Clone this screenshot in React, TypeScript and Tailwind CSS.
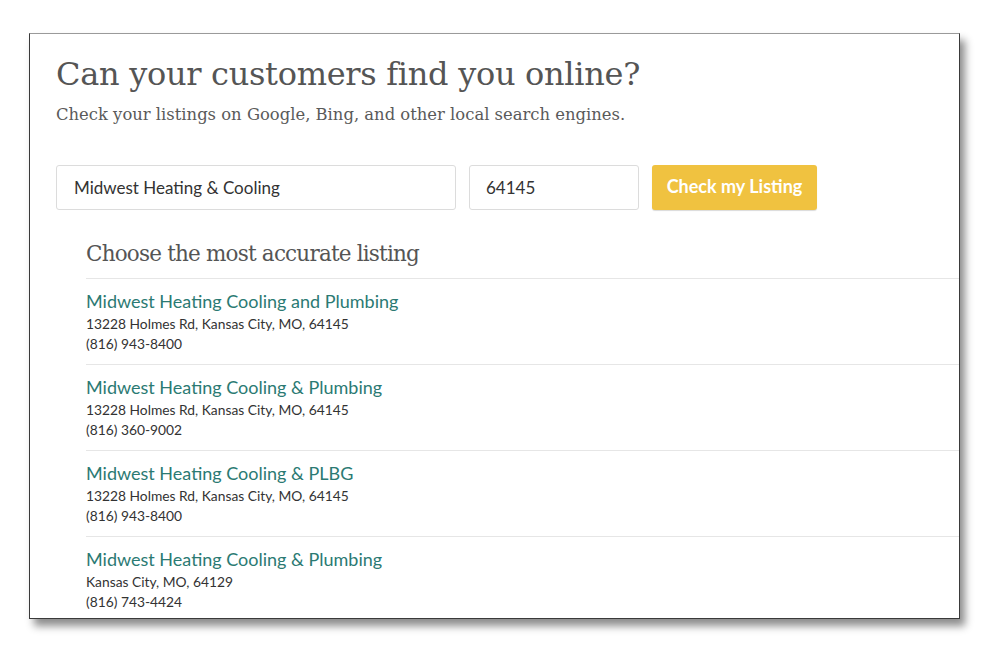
import React from 'react';

interface Listing {
  name: string;
  address: string;
  phone: string;
}

const LISTINGS: Listing[] = [
  { name: 'Midwest Heating Cooling and Plumbing', address: '13228 Holmes Rd, Kansas City, MO, 64145', phone: '(816) 943-8400' },
  { name: 'Midwest Heating Cooling & Plumbing', address: '13228 Holmes Rd, Kansas City, MO, 64145', phone: '(816) 360-9002' },
  { name: 'Midwest Heating Cooling & PLBG', address: '13228 Holmes Rd, Kansas City, MO, 64145', phone: '(816) 943-8400' },
  { name: 'Midwest Heating Cooling & Plumbing', address: 'Kansas City, MO, 64129', phone: '(816) 743-4424' },
];

const slab = "font-['DejaVu_Serif','Liberation_Serif',serif]";
const lato = "font-['Lato','Liberation_Sans',sans-serif]";

const App: React.FC = () => {
  return (
    <div className="w-[989px] h-[651px] bg-white pt-[33px] pl-[29px]">
      <div className="w-[931px] h-[586px] overflow-hidden bg-white border border-[#3a3a3a] border-t-[#9a9a9a] shadow-[5px_7px_8px_rgba(0,0,0,0.45)]">
        <div className="pl-[26px] pt-[18px]">
          <h1 className={`${slab} text-[32px] leading-[44px] text-[#555] tracking-[-0.3px]`}>
            Can your customers find you online?
          </h1>
          <p className={`${slab} text-[16.4px] leading-[22px] text-[#5a5a5a] mt-[8px]`}>
            Check your listings on Google, Bing, and other local search engines.
          </p>

          <div className="flex items-center gap-[13px] mt-[39px]">
            <input
              className={`${lato} w-[400px] h-[45px] border border-[#dcdcdc] rounded-[3px] pl-[17px] text-[17px] text-[#333] outline-none`}
              defaultValue="Midwest Heating & Cooling"
            />
            <input
              className={`${lato} w-[170px] h-[45px] border border-[#dcdcdc] rounded-[3px] pl-[16px] text-[17px] text-[#333] outline-none`}
              defaultValue="64145"
            />
            <button
              className={`${lato} w-[165px] h-[45px] bg-[#f0c240] rounded-[3px] text-white font-bold text-[18px] pb-[2px] shadow-[0_1px_1px_rgba(0,0,0,0.15)]`}
            >
              Check my Listing
            </button>
          </div>
        </div>

        <div className="pl-[56px] mt-[28px]">
          <h2 className={`${slab} text-[21.5px] leading-[32px] tracking-[-0.8px] text-[#555] pb-[8px] border-b border-[#e6e6e6]`}>
            Choose the most accurate listing
          </h2>
          {LISTINGS.map((l, i) => (
            <div key={i} className={`${lato} pt-[10px] pb-[11px] border-b border-[#e6e6e6]`}>
              <div className="text-[18px] leading-[25px] text-[#2b7a73]">{l.name}</div>
              <div className="text-[13.8px] leading-[20px] text-[#333]">{l.address}</div>
              <div className="text-[13.8px] leading-[19px] text-[#333]">{l.phone}</div>
            </div>
          ))}
        </div>
      </div>
    </div>
  );
};

export default App;
